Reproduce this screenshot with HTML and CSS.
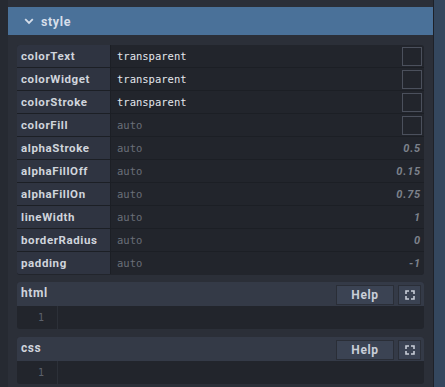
FILE: index.html
```html
<!DOCTYPE html>
<html lang="en">
  <head>
    <meta charset="UTF-8" />
    <title>style</title>
    <link rel="stylesheet" href="styles.css">
  </head>
  <body>
    <div class="panel">
      <!-- Section header -->
      <div class="section-head">
        <svg class="chevron" width="10" height="7" viewBox="0 0 10 7">
          <path d="M1.2 1.2 L5 5 L8.8 1.2" fill="none" stroke="#d6deea" stroke-width="1.8" />
        </svg>
        <span>style</span>
      </div>

      <div class="section-body">
        <!-- Properties table -->
        <div class="props">
          <div class="row"><div class="key">colorText</div><div class="val">transparent<span class="swatch"></span></div></div>
          <div class="row"><div class="key">colorWidget</div><div class="val">transparent<span class="swatch"></span></div></div>
          <div class="row"><div class="key">colorStroke</div><div class="val">transparent<span class="swatch"></span></div></div>
          <div class="row"><div class="key">colorFill</div><div class="val dim">auto<span class="swatch"></span></div></div>
          <div class="row"><div class="key">alphaStroke</div><div class="val dim">auto<span class="num">0.5</span></div></div>
          <div class="row"><div class="key">alphaFillOff</div><div class="val dim">auto<span class="num">0.15</span></div></div>
          <div class="row"><div class="key">alphaFillOn</div><div class="val dim">auto<span class="num">0.75</span></div></div>
          <div class="row"><div class="key">lineWidth</div><div class="val dim">auto<span class="num">1</span></div></div>
          <div class="row"><div class="key">borderRadius</div><div class="val dim">auto<span class="num">0</span></div></div>
          <div class="row"><div class="key">padding</div><div class="val dim">auto<span class="num">-1</span></div></div>
        </div>

        <!-- html editor -->
        <div class="editor">
          <div class="editor-head">
            <span class="editor-title">html</span>
            <button class="help">Help</button>
            <button class="full">
              <svg width="10" height="10" viewBox="0 0 10 10">
                <path d="M1 4 V1 H4 M6 1 H9 V4 M9 6 V9 H6 M4 9 H1 V6" fill="none" stroke="#c9ced8" stroke-width="1.6" />
              </svg>
            </button>
          </div>
          <div class="code"><div class="gutter">1</div><div class="lines"></div></div>
        </div>

        <!-- css editor -->
        <div class="editor">
          <div class="editor-head">
            <span class="editor-title">css</span>
            <button class="help">Help</button>
            <button class="full">
              <svg width="10" height="10" viewBox="0 0 10 10">
                <path d="M1 4 V1 H4 M6 1 H9 V4 M9 6 V9 H6 M4 9 H1 V6" fill="none" stroke="#c9ced8" stroke-width="1.6" />
              </svg>
            </button>
          </div>
          <div class="code"><div class="gutter">1</div><div class="lines"></div></div>
        </div>
      </div>
    </div>
    <div class="divider"></div>
    <div class="side"></div>
  </body>
</html>
```

FILE: styles.css
```css
/* page frame */
body {
  margin: 0;
  height: 387px;
  overflow: hidden;
  display: flex;
  background-color: #262a32;
  font-family: Roboto, "Liberation Sans", sans-serif;
  color: #d6dae2;
}

.panel {
  width: 425px;
  margin-left: 8px;
  padding-top: 7px;
  background-color: #2b2f38;
}

.divider {
  width: 1px;
  background-color: #1e2128;
}

.side {
  flex: 1;
  background-color: #34475e;
}

/* blue section header */
.section-head {
  height: 28px;
  display: flex;
  align-items: center;
  gap: 7px;
  padding-left: 16px;
  background-color: #4a7199;
  color: #d6deea;
  font-weight: bold;
  font-size: 12.5px;
  letter-spacing: 0.6px;
}

.chevron {
  margin-top: 1px;
}

.section-body {
  padding: 10px 9px 0 9px;
}

/* properties table */
.props {
  background-color: #22252c;
  border-radius: 3px;
  border-bottom: 1px solid #22252c;
  overflow: hidden;
}

.row {
  display: flex;
  height: 22px;
  border-bottom: 1px solid #1c1f25;
}

.row:last-child {
  border-bottom: none;
}

.key {
  width: 89px;
  padding-left: 4px;
  display: flex;
  align-items: center;
  background-color: #2f3441;
  border-right: 1px solid #1c1f25;
  font-size: 11.5px;
  font-weight: bold;
  letter-spacing: 0.6px;
  color: #d0d4dc;
}

.val {
  flex: 1;
  display: flex;
  align-items: center;
  padding-left: 6px;
  padding-right: 2px;
  font-family: "DejaVu Sans Mono", monospace;
  font-size: 10.5px;
  color: #e4e7ec;
}

.val.dim {
  color: #6a6f79;
}

.swatch {
  margin-left: auto;
  width: 18px;
  height: 17px;
  border: 1px solid #4b505c;
}

.num {
  margin-left: auto;
  padding-right: 1px;
  font-family: Roboto, "Liberation Sans", sans-serif;
  font-style: italic;
  font-weight: bold;
  font-size: 11px;
  letter-spacing: 0.8px;
  color: #7c818b;
}

/* code editors */
.editor {
  margin-top: 7px;
  border-radius: 3px;
  overflow: hidden;
  background-color: #22252c;
}

.editor + .editor {
  margin-top: 8px;
}

.editor-head {
  height: 24px;
  display: flex;
  align-items: center;
  gap: 4px;
  padding: 0 3px 0 4px;
  background-color: #343a47;
}

.editor-title {
  flex: 1;
  margin-top: -3px;
  font-size: 12px;
  font-weight: bold;
  letter-spacing: 0.6px;
  color: #d0d4dc;
}

button {
  height: 20px;
  margin-top: 2px;
  border: 1px solid #2a2e37;
  background-color: #3b4353;
  color: #c9ced8;
  padding: 0;
  font-family: Roboto, "Liberation Sans", sans-serif;
  font-weight: bold;
  font-size: 12px;
  letter-spacing: 0.6px;
}

.help {
  width: 58px;
}

.full {
  width: 23px;
  display: flex;
  align-items: center;
  justify-content: center;
}

.code {
  height: 23px;
  display: flex;
}

.gutter {
  width: 27px;
  padding-right: 13px;
  text-align: right;
  line-height: 23px;
  border-right: 1px solid #2c3038;
  font-family: "DejaVu Sans Mono", monospace;
  font-size: 10px;
  color: #5c616b;
}

.lines {
  flex: 1;
}
```
